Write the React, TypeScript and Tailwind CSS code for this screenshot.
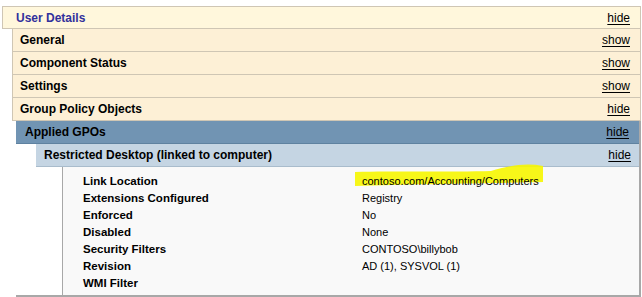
import React from "react";

const font = { fontFamily: '"Liberation Sans", Arial, sans-serif' };

type RowProps = {
  title: string;
  action: "show" | "hide";
  bg: string;
  titleColor?: string;
  pad: string;
};

const Row = ({ title, action, bg, titleColor = "text-black", pad }: RowProps) => (
  <div
    className={`h-[23px] flex items-center justify-between border border-t-0 border-[#cfc6b4] pr-[10px] ${bg} ${pad}`}
  >
    <span className={`font-bold text-[12px] ${titleColor}`}>{title}</span>
    <a className="text-[12px] text-black underline underline-offset-2 cursor-pointer">
      {action}
    </a>
  </div>
);

const details = [
  ["Link Location", "contoso.com/Accounting/Computers"],
  ["Extensions Configured", "Registry"],
  ["Enforced", "No"],
  ["Disabled", "None"],
  ["Security Filters", "CONTOSO\\billybob"],
  ["Revision", "AD (1), SYSVOL (1)"],
  ["WMI Filter", ""],
];

const App = () => {
  return (
    <div className="w-[642px] h-[297px] bg-white pt-[6px] pl-[2px] pr-[1px]" style={font}>
      <div className="h-[23px] flex items-center justify-between border border-[#cfc6b4] bg-[#fff7dc] pl-[13px] pr-[10px]">
        <span className="font-bold text-[12px] text-[#31319c]">User Details</span>
        <a className="text-[12px] text-black underline underline-offset-2 cursor-pointer">hide</a>
      </div>
      <div className="ml-[10px]">
        <Row title="General" action="show" bg="bg-[#fdf0d6]" pad="pl-[7px]" />
        <Row title="Component Status" action="show" bg="bg-[#fdf0d6]" pad="pl-[7px]" />
        <Row title="Settings" action="show" bg="bg-[#fdf0d6]" pad="pl-[7px]" />
        <Row title="Group Policy Objects" action="hide" bg="bg-[#fdf0d6]" pad="pl-[7px]" />
        <div className="ml-[4px] border-b-2 border-[#a8a8a8] border-r-2">
          <div className="h-[23px] flex items-center justify-between bg-[#7194b3] pl-[9px] pr-[10px] border-b border-[#5f82a0]">
            <span className="font-bold text-[12px] text-black">Applied GPOs</span>
            <a className="text-[12px] text-black underline underline-offset-2 cursor-pointer">hide</a>
          </div>
          <div className="ml-[20px]">
            <div className="h-[23px] flex items-center justify-between bg-[#c5d5e3] pl-[8px] pr-[8px] border-b border-[#a9bccc]">
              <span className="font-bold text-[12px] text-black">Restricted Desktop (linked to computer)</span>
              <a className="text-[12px] text-black underline underline-offset-2 cursor-pointer">hide</a>
            </div>
            <div className="ml-[26px] border-l border-[#a8a8a8] bg-[#f9f9f9] pt-[6px] pb-[3px] pl-[20px] relative">
              <svg className="absolute left-[290px] top-[-4px]" width="192" height="26" viewBox="0 0 192 26">
                <path
                  d="M2 9 C40 8 100 9 138 8 C158 2 174 0 190 3 L190 19 C150 20 60 21 2 23 Z"
                  fill="#f6f600"
                  opacity="0.9"
                />
              </svg>
              {details.map(([label, value]) => (
                <div key={label} className="flex h-[17px] items-center text-black relative">
                  <span className="w-[279px] font-bold text-[11.5px]">{label}</span>
                  <span className="text-[11px]">{value}</span>
                </div>
              ))}
            </div>
          </div>
        </div>
      </div>
    </div>
  );
};

export default App;
